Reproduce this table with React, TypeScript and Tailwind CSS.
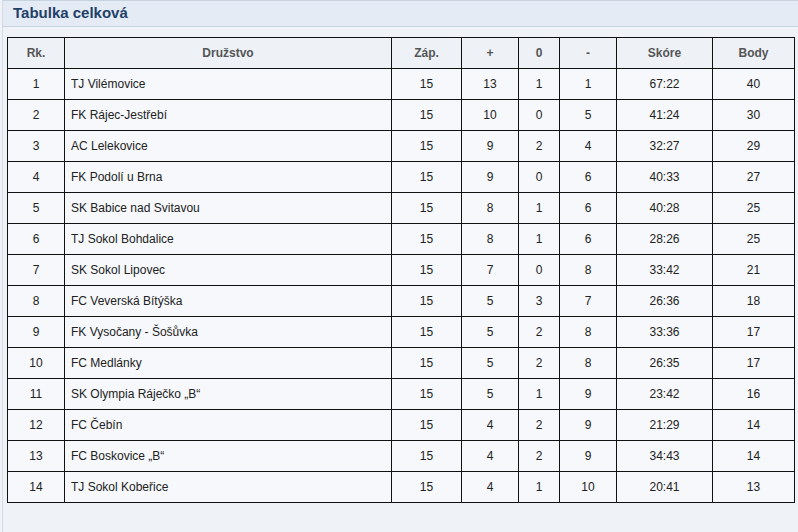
const rows: [number, string, number, number, number, number, string, number][] = [
  [1, "TJ Vilémovice", 15, 13, 1, 1, "67:22", 40],
  [2, "FK Rájec-Jestřebí", 15, 10, 0, 5, "41:24", 30],
  [3, "AC Lelekovice", 15, 9, 2, 4, "32:27", 29],
  [4, "FK Podolí u Brna", 15, 9, 0, 6, "40:33", 27],
  [5, "SK Babice nad Svitavou", 15, 8, 1, 6, "40:28", 25],
  [6, "TJ Sokol Bohdalice", 15, 8, 1, 6, "28:26", 25],
  [7, "SK Sokol Lipovec", 15, 7, 0, 8, "33:42", 21],
  [8, "FC Veverská Bítýška", 15, 5, 3, 7, "26:36", 18],
  [9, "FK Vysočany - Šošůvka", 15, 5, 2, 8, "33:36", 17],
  [10, "FC Medlánky", 15, 5, 2, 8, "26:35", 17],
  [11, "SK Olympia Ráječko „B“", 15, 5, 1, 9, "23:42", 16],
  [12, "FC Čebín", 15, 4, 2, 9, "21:29", 14],
  [13, "FC Boskovice „B“", 15, 4, 2, 9, "34:43", 14],
  [14, "TJ Sokol Kobeřice", 15, 4, 1, 10, "20:41", 13],
];

const headers = [
  { label: "Rk.", w: "w-[57px]" },
  { label: "Družstvo", w: "w-[327px]" },
  { label: "Záp.", w: "w-[70px]" },
  { label: "+", w: "w-[57px]" },
  { label: "0", w: "w-[41px]" },
  { label: "-", w: "w-[57px]" },
  { label: "Skóre", w: "w-[96px]" },
  { label: "Body", w: "w-[82px]" },
];

export default function App() {
  return (
    <div className="w-[798px] h-[532px] bg-[#eff3f8] font-['Liberation_Sans',Arial,sans-serif] overflow-hidden pl-[2px]">
      <div className="h-full border-l border-[#d3dce6]">
        <div className="h-[27px] border-y border-[#c5d2df] bg-[#e4ebf4] pl-[10px] flex items-center">
          <span className="text-[15px] font-bold text-[#1f4068]">Tabulka celková</span>
        </div>
        <div className="pl-[4px] pt-[10px]">
          <table className="table-fixed border-collapse w-[787px] text-[12px]">
            <thead>
              <tr className="bg-[#eef2f7]">
                {headers.map((h) => (
                  <th key={h.label} className={`${h.w} h-[31px] border border-[#111] font-bold text-[#555] text-center`}>
                    {h.label}
                  </th>
                ))}
              </tr>
            </thead>
            <tbody>
              {rows.map((r) => (
                <tr key={r[0]} className="bg-[#f6f8fb] text-[#222]">
                  <td className="h-[31px] border border-[#111] text-center">{r[0]}</td>
                  <td className="border border-[#111] pl-[6px] text-left">{r[1]}</td>
                  <td className="border border-[#111] text-center">{r[2]}</td>
                  <td className="border border-[#111] text-center">{r[3]}</td>
                  <td className="border border-[#111] text-center">{r[4]}</td>
                  <td className="border border-[#111] text-center">{r[5]}</td>
                  <td className="border border-[#111] text-center">{r[6]}</td>
                  <td className="border border-[#111] text-center">{r[7]}</td>
                </tr>
              ))}
            </tbody>
          </table>
        </div>
      </div>
    </div>
  );
}
